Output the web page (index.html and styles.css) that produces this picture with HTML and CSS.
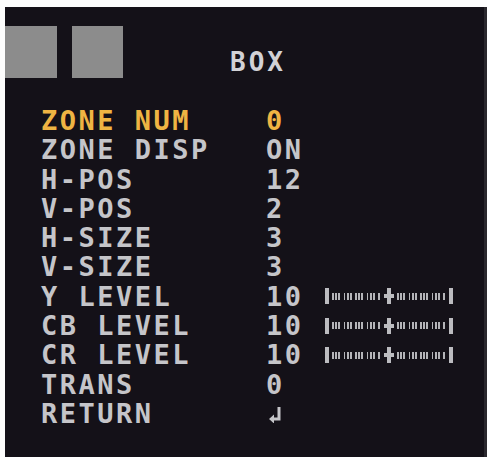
FILE: index.html
```html
<!DOCTYPE html>
<html lang="en">
<head>
    <meta charset="UTF-8">
    <meta name="viewport" content="width=device-width, initial-scale=1.0">
    <title>BOX</title>
    <link rel="stylesheet" href="styles.css">
</head>
<body>
    <div class="screen">
        <div class="header">
            <div class="tiles">
                <div class="tile"></div>
                <div class="tile"></div>
            </div>
            <h1 class="title">BOX</h1>
        </div>

        <ul class="menu">
            <li class="item active"><span class="label">ZONE NUM</span><span class="value">0</span></li>
            <li class="item"><span class="label">ZONE DISP</span><span class="value">ON</span></li>
            <li class="item"><span class="label">H-POS</span><span class="value">12</span></li>
            <li class="item"><span class="label">V-POS</span><span class="value">2</span></li>
            <li class="item"><span class="label">H-SIZE</span><span class="value">3</span></li>
            <li class="item"><span class="label">V-SIZE</span><span class="value">3</span></li>
            <li class="item">
                <span class="label">Y LEVEL</span><span class="value">10</span>
                <span class="slider"><i class="cap"></i><i class="ticks"></i><i class="mark"></i><i class="ticks"></i><i class="cap"></i></span>
            </li>
            <li class="item">
                <span class="label">CB LEVEL</span><span class="value">10</span>
                <span class="slider"><i class="cap"></i><i class="ticks"></i><i class="mark"></i><i class="ticks"></i><i class="cap"></i></span>
            </li>
            <li class="item">
                <span class="label">CR LEVEL</span><span class="value">10</span>
                <span class="slider"><i class="cap"></i><i class="ticks"></i><i class="mark"></i><i class="ticks"></i><i class="cap"></i></span>
            </li>
            <li class="item"><span class="label">TRANS</span><span class="value">0</span></li>
            <li class="item">
                <span class="label">RETURN</span>
                <span class="value">
                    <svg class="enter" width="14" height="18" viewBox="0 0 14 18">
                        <path d="M11 2 V14 H5" fill="none" stroke="currentColor" stroke-width="3"/>
                        <path d="M1 14 L6 9.5 V18.5 Z" fill="currentColor"/>
                    </svg>
                </span>
            </li>
        </ul>
    </div>
</body>
</html>
```

FILE: styles.css
```css
body {
    margin: 0;
    background: #fdfdfd;
    font-family: 'DejaVu Sans Mono', monospace;
    font-weight: bold;
}

.screen {
    margin: 7px 0 0 5px;
    height: 450px;
    background: #141118;
    border-right: 3px solid #2a282e;
    color: #c5c5c9;
}

.header {
    display: flex;
    align-items: flex-start;
    height: 99px;
}

.tiles {
    display: flex;
    gap: 15px;
    padding-top: 19px;
}

.tile {
    width: 52px;
    height: 52px;
    background: #8c8c8c;
}

.tile + .tile {
    width: 51px;
}

.title {
    margin: 41px 0 0 107px;
    font-size: 26px;
    line-height: 29.3px;
    letter-spacing: 3px;
    color: #d2d2d6;
}

.menu {
    list-style: none;
    margin: 0;
    padding: 0 0 0 36px;
}

.item {
    display: flex;
    align-items: center;
    height: 29.3px;
    font-size: 27px;
    line-height: 29.3px;
    letter-spacing: 2.5px;
}

.label {
    width: 225px;
}

.value {
    width: 59px;
    display: flex;
    align-items: center;
}

.active {
    color: #efb443;
}

.enter {
    margin: 0 0 0 2px;
}

/* level bar: end caps, tick groups, centre mark */
.slider {
    display: flex;
    align-items: center;
    gap: 3px;
    width: 128px;
    height: 16px;
}

.slider i {
    display: block;
}

.cap {
    width: 4px;
    height: 16px;
    background: #bcbcc0;
}

.ticks {
    flex: 1;
    height: 7px;
    background: repeating-linear-gradient(90deg,
        #b4b4b8 0 1.8px, transparent 1.8px 3.2px,
        #b4b4b8 3.2px 5px, transparent 5px 6.4px,
        #b4b4b8 6.4px 8.2px, transparent 8.2px 11.5px);
}

.mark {
    width: 10px;
    height: 16px;
    background:
        linear-gradient(#bcbcc0, #bcbcc0) center / 4px 100% no-repeat,
        linear-gradient(#bcbcc0, #bcbcc0) center / 100% 4px no-repeat;
}
```
